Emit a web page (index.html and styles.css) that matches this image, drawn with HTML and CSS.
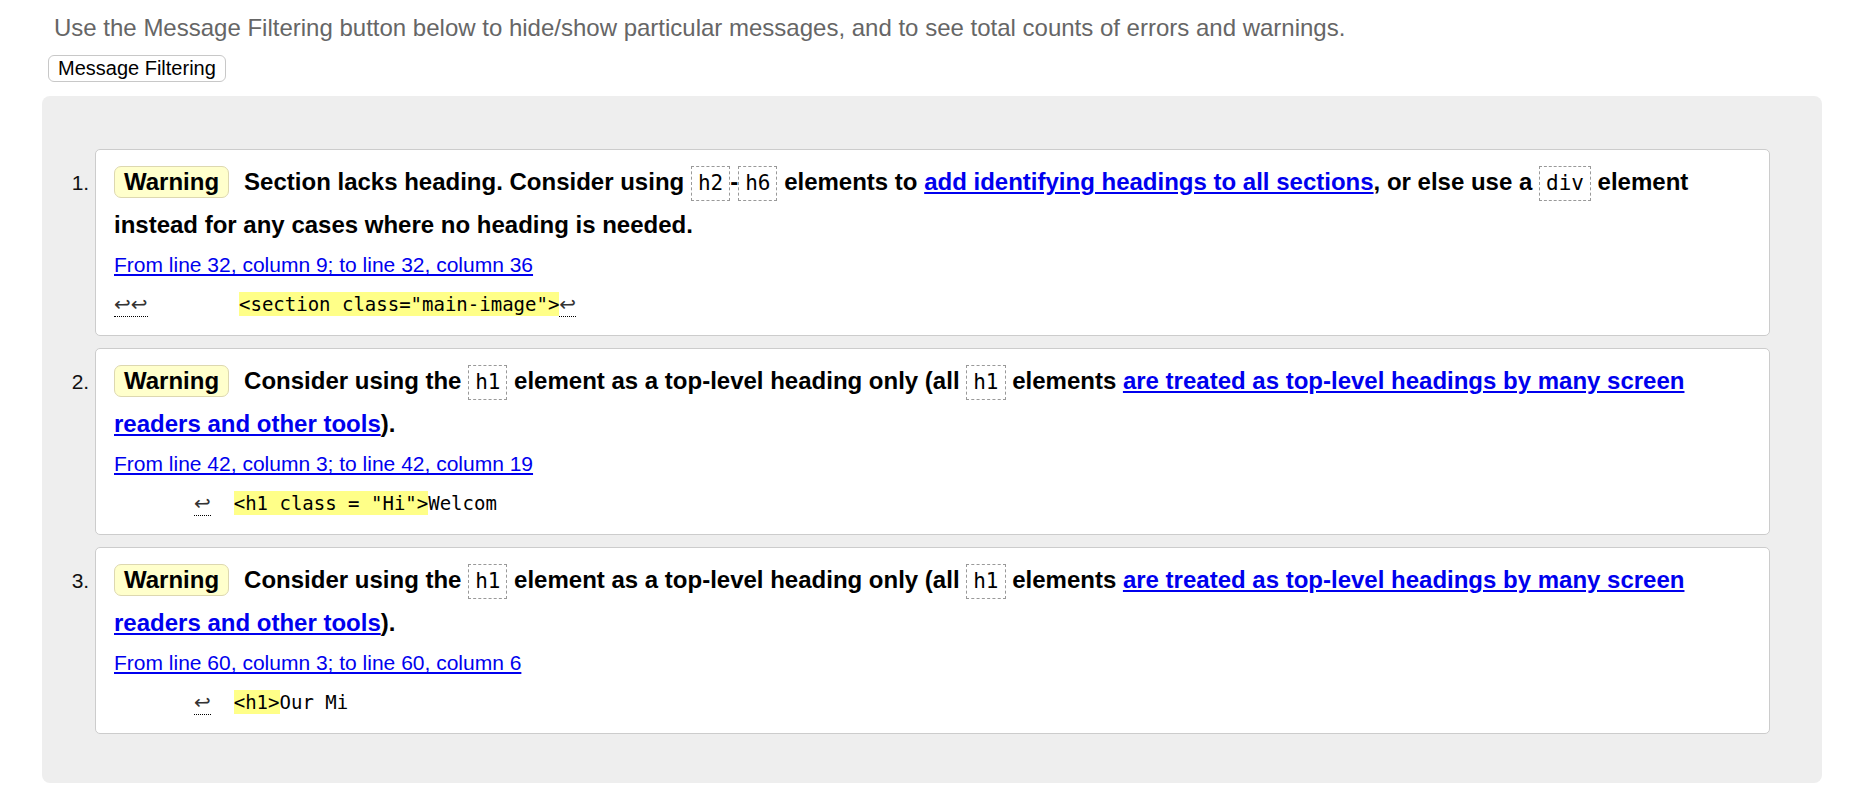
FILE: index.html
```html
<!DOCTYPE html>
<html lang="en">
<head>
<meta charset="utf-8">
<title>Validation results</title>
<link rel="stylesheet" href="styles.css">
</head>
<body>
<div class="page">
  <p class="intro">Use the Message Filtering button below to hide/show particular messages, and to see total counts of errors and warnings.</p>
  <button class="filter-btn" type="button">Message Filtering</button>
  <div class="results">
    <ol class="list">
      <li class="card">
        <p class="msg"><span class="badge">Warning</span><span class="text">Section lacks heading. Consider using <code>h2</code>-<code>h6</code> elements to <a href="#">add identifying headings to all sections</a>, or else use a <code>div</code> element instead for any cases where no heading is needed.</span></p>
        <p class="loc"><a href="#">From line 32, column 9; to line 32, column 36</a></p>
        <p class="extract"><code class="src"><b class="lf">↩↩</b>        <mark>&lt;section class="main-image"&gt;</mark><b class="lf">↩</b></code></p>
      </li>
      <li class="card">
        <p class="msg"><span class="badge">Warning</span><span class="text">Consider using the <code>h1</code> element as a top-level heading only (all <code>h1</code> elements <a href="#">are treated as top-level headings by many screen readers and other tools</a>).</span></p>
        <p class="loc"><a href="#">From line 42, column 3; to line 42, column 19</a></p>
        <p class="extract"><code class="src">       <b class="lf">↩</b>  <mark>&lt;h1 class = "Hi"&gt;</mark>Welcom</code></p>
      </li>
      <li class="card">
        <p class="msg"><span class="badge">Warning</span><span class="text">Consider using the <code>h1</code> element as a top-level heading only (all <code>h1</code> elements <a href="#">are treated as top-level headings by many screen readers and other tools</a>).</span></p>
        <p class="loc"><a href="#">From line 60, column 3; to line 60, column 6</a></p>
        <p class="extract"><code class="src">       <b class="lf">↩</b>  <mark>&lt;h1&gt;</mark>Our Mi</code></p>
      </li>
    </ol>
  </div>
</div>
</body>
</html>
```
FILE: styles.css
```css
html, body {
  margin: 0;
  padding: 0;
  background: #fff;
}

body {
  font-family: "Liberation Sans", Arial, sans-serif;
  font-size: 24px;
  color: #000;
}

.page {
  padding: 14px 48px 0 42px;
}

.intro {
  margin: 0 0 14px 12px;
  color: #666;
  line-height: 27px;
}

.filter-btn {
  display: block;
  margin: 0 0 14px 6px;
  height: 27px;
  padding: 0 9px;
  font-family: "Liberation Sans", Arial, sans-serif;
  font-size: 20px;
  line-height: 23px;
  color: #000;
  background: #fff;
  border: 1px solid #c8c8c8;
  border-radius: 6px;
}

.results {
  background: #eee;
  border-radius: 8px;
  padding: 53px 52px 49px 53px;
}

.list {
  margin: 0;
  padding: 0;
  list-style: decimal outside;
}

.card {
  background: #fff;
  border: 1px solid #ccc;
  border-radius: 5px;
  padding: 10px 18px 11px;
  margin: 0 0 12px;
}

.card:last-child {
  margin-bottom: 0;
}

.card::marker {
  font-size: 21px;
  font-weight: normal;
  color: #111;
}

.msg {
  margin: 0;
  font-weight: bold;
  line-height: 43.2px;
}

.badge {
  display: inline-block;
  background: #ffc;
  border: 1px solid #ddd8b0;
  border-radius: 7px;
  padding: 0 9px;
  line-height: 30px;
  margin-right: 15px;
}

.msg code {
  display: inline-block;
  font-family: "DejaVu Sans Mono", "Liberation Mono", monospace;
  font-weight: normal;
  font-size: 21px;
  line-height: 27px;
  padding: 3px 6px;
  border: 1px dashed #999;
  margin: 0;
}

.msg a {
  color: #00e;
  text-decoration: underline;
}

.loc {
  margin: 0;
  font-size: 21px;
  line-height: 37.8px;
}

.loc a {
  color: #00e;
  text-decoration: underline;
}

.extract {
  margin: 0;
  line-height: 37.8px;
}

.src {
  font-family: "DejaVu Sans Mono", "Liberation Mono", monospace;
  font-size: 19px;
  white-space: pre;
  color: #000;
}

.src mark {
  background: #ff8;
  color: #000;
  padding: 1px 0;
}

.lf {
  font-family: "DejaVu Sans", sans-serif;
  font-weight: normal;
  font-size: 20px;
  border-bottom: 1px dotted #000;
  color: #333;
}
```
